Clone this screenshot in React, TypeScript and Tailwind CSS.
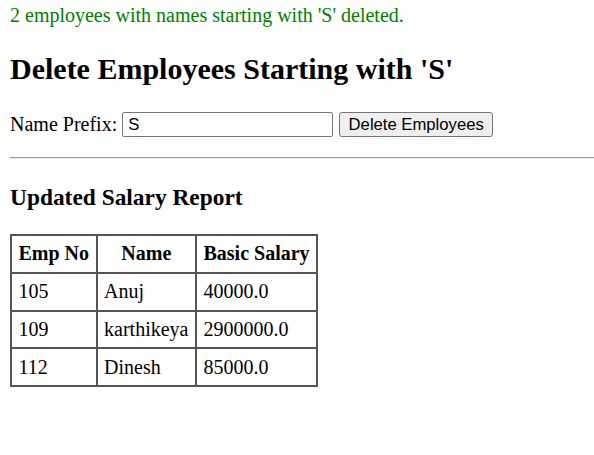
const employees = [
  { empNo: '105', name: 'Anuj', salary: '40000.0' },
  { empNo: '109', name: 'karthikeya', salary: '2900000.0' },
  { empNo: '112', name: 'Dinesh', salary: '85000.0' },
]

export default function App() {
  return (
    <div className="min-h-screen bg-white pl-[10px] pt-[4px] text-black font-['Liberation_Serif','Times_New_Roman',serif]">
      <div className="text-[20px] leading-[23px] text-[#008000]">
        2 employees with names starting with 'S' deleted.
      </div>

      <h2 className="mt-[25px] text-[30px] leading-[34px] font-bold">
        Delete Employees Starting with 'S'
      </h2>

      <form className="mt-[26px] flex h-[25px] items-center text-[20px] leading-[23px]">
        <label htmlFor="prefix">Name Prefix:</label>
        <input
          id="prefix"
          defaultValue="S"
          className="ml-[5px] h-[25px] w-[211px] rounded-[2px] border border-[#767676] px-[5px] text-[16.67px] font-['Liberation_Sans',Arial,sans-serif] outline-none"
        />
        <button
          type="button"
          className="ml-[6px] h-[25px] w-[154px] rounded-[3px] border border-[#767676] bg-[#efefef] text-[16.67px] leading-[20px] font-['Liberation_Sans',Arial,sans-serif]"
        >
          Delete Employees
        </button>
      </form>

      <hr className="mt-[20px] border-t border-b border-t-[#9a9a9a] border-b-[#eeeeee]" />

      <h3 className="mt-[25px] text-[23.4px] leading-[27px] font-bold">Updated Salary Report</h3>

      <table className="mt-[23px] border-collapse border-2 border-[#555] text-[20px] leading-[23px]">
        <thead>
          <tr>
            <th className="border-2 border-[#555] px-[6.5px] py-[6.4px] text-left">Emp No</th>
            <th className="border-2 border-[#555] px-[6.5px] py-[6.4px] text-center">Name</th>
            <th className="border-2 border-[#555] px-[6.5px] py-[6.4px] text-left">Basic Salary</th>
          </tr>
        </thead>
        <tbody>
          {employees.map((e) => (
            <tr key={e.empNo}>
              <td className="border-2 border-[#555] px-[6.5px] py-[6.4px]">{e.empNo}</td>
              <td className="border-2 border-[#555] px-[6.5px] py-[6.4px]">{e.name}</td>
              <td className="border-2 border-[#555] px-[6.5px] py-[6.4px]">{e.salary}</td>
            </tr>
          ))}
        </tbody>
      </table>
    </div>
  )
}
